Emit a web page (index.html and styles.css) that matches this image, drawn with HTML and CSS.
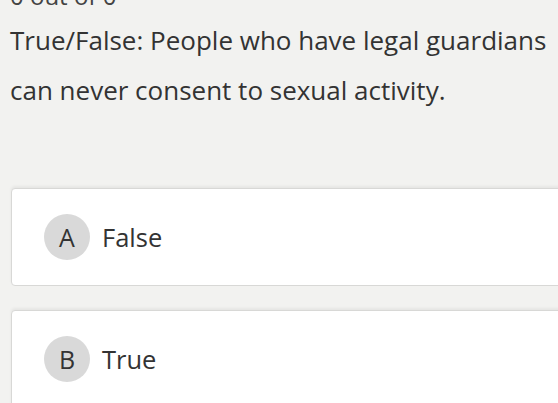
FILE: index.html
```html
<!DOCTYPE html>
<html>
<head>
<meta charset="utf-8">
<link rel="stylesheet" href="styles.css">
</head>
<body>
<div class="page">
  <div class="counter">0 out of 0</div>
  <h1 class="question">True/False: People who have legal guardians can never consent to sexual activity.</h1>
  <div class="options">
    <div class="option">
      <span class="letter">A</span>
      <span class="label">False</span>
    </div>
    <div class="option">
      <span class="letter">B</span>
      <span class="label">True</span>
    </div>
  </div>
</div>
</body>
</html>
```

FILE: styles.css
```css
html, body {
  margin: 0;
  padding: 0;
  background: #f2f2f0;
  overflow: hidden;
}
.page {
  font-family: "Open Sans", "Noto Sans", sans-serif;
  color: #333;
  padding-left: 10px;
  margin-top: -19px;
}
.counter {
  font-size: 24px;
  line-height: 30px;
  color: #444;
}
.question {
  margin: 0;
  font-size: 26px;
  font-weight: 400;
  line-height: 50px;
  width: 548px;
  margin-top: 4px;
}
.options {
  margin-top: 73px;
  display: flex;
  flex-direction: column;
  gap: 24px;
  padding-left: 1px;
}
.option {
  width: 580px;
  height: 96px;
  box-sizing: content-box;
  background: #fff;
  border: 1px solid #d8d8d6;
  border-radius: 4px;
  box-shadow: 0 -2px 3px rgba(0,0,0,0.05);
  display: flex;
  align-items: center;
  padding-left: 32px;
  gap: 12px;
}
.letter {
  width: 46px;
  height: 46px;
  border-radius: 50%;
  background: #d9d9d9;
  display: flex;
  align-items: center;
  justify-content: center;
  font-size: 25px;
  color: #333;
}
.label {
  font-size: 25.5px;
  color: #333;
}
```
